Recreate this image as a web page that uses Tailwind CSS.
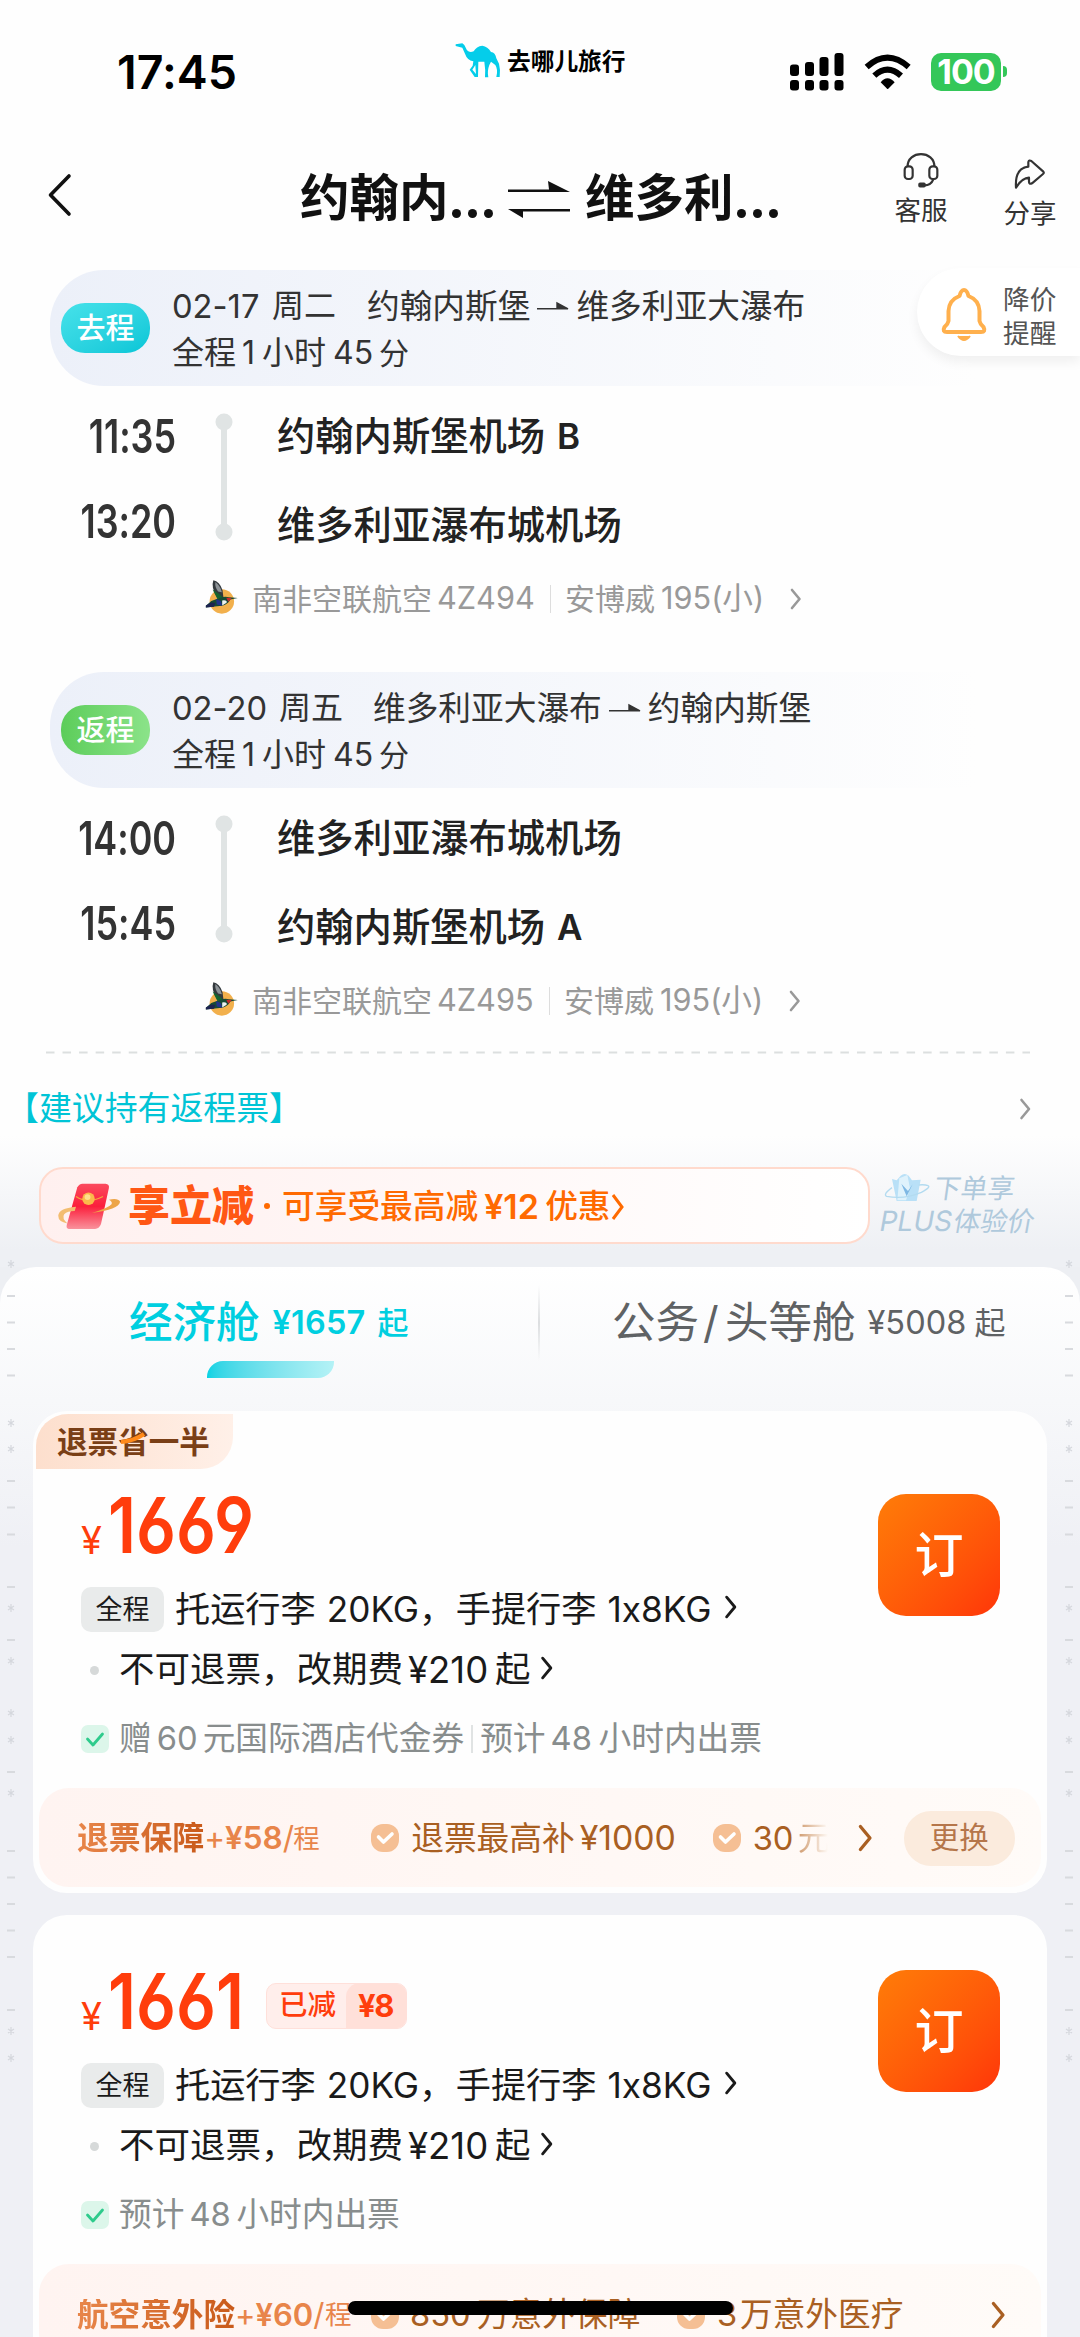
<!DOCTYPE html>
<html lang="zh-CN">
<head>
<meta charset="utf-8">
<title>航班预订</title>
<script src="https://cdn.jsdelivr.net/npm/@tailwindcss/browser@4"></script>
</head>
<body class="bg-[#fefefe]">
<svg class="hidden">
  <defs>
    <symbol id="bird" viewBox="48 42 96 100">
      <circle cx="97" cy="105" r="36" fill="#f2b04c"/>
      <path d="M72 43Q90 46 99 72L102 96L84 94Q64 66 72 43Z" fill="#33393d"/>
      <path d="M78 48Q92 58 97 78L86 76Q76 64 78 48Z" fill="#8d9397"/>
      <path d="M70 70L90 84L102 96L84 98Z" fill="#14642f"/>
      <path d="M50 118L66 104L92 94Q108 89 118 93L144 95L122 99Q116 112 98 118L76 120L50 123Z" fill="#174a35"/>
      <path d="M80 98L94 104L98 118L82 114Z" fill="#23318c"/>
      <path d="M98 102Q114 100 111 109L98 117Z" fill="#eef2f2"/>
      <path d="M110 94L126 95L116 106Z" fill="#c8272d"/>
      <path d="M50 117L66 108L78 110L74 121L50 123Z" fill="#1d2350"/>
    </symbol>
    <symbol id="chev" viewBox="0 0 12 22"><path d="M2 2 L9.500 11 L2 20" fill="none" stroke="currentColor" stroke-width="2.600" stroke-linecap="round" stroke-linejoin="round"/></symbol>
    <symbol id="half" viewBox="0 0 32 10"><path d="M0 7.800H31L20 2V7.800" fill="currentColor" stroke="currentColor" stroke-width="1.400"/></symbol>
    <symbol id="tick" viewBox="0 0 28 28"><rect width="28" height="28" rx="7" fill="#dcf6ea"/><path d="M6.500 14 L12 20 L21.500 9" fill="none" stroke="#2ecb8c" stroke-width="2.800" stroke-linecap="round" stroke-linejoin="round"/></symbol>
    <symbol id="badge" viewBox="0 0 28 28"><rect width="28" height="28" rx="12" fill="#f5bf94"/><path d="M7.500 13 L12.500 18 L21 10" fill="none" stroke="#fff" stroke-width="3.600" stroke-linecap="round" stroke-linejoin="round"/></symbol>
    <symbol id="star" viewBox="0 0 8 10"><path d="M4 1V9M1 3L7 7M7 3L1 7" stroke="#d5d7dd" stroke-width="1.200"/></symbol>
    <symbol id="marks" viewBox="0 1255 8 820">
      <g fill="#d8dade">
        <rect x="0" y="1295" width="8" height="2"/><rect x="0" y="1321.500" width="8" height="2"/><rect x="0" y="1348" width="8" height="2"/><rect x="0" y="1374.500" width="8" height="2"/>
        <rect x="0" y="1480" width="8" height="2"/><rect x="0" y="1506.500" width="8" height="2"/><rect x="0" y="1533.500" width="8" height="2"/><rect x="0" y="1586" width="8" height="2"/><rect x="0" y="1639" width="8" height="2"/>
        <rect x="0" y="1771" width="8" height="2"/><rect x="0" y="1850" width="8" height="2"/><rect x="0" y="1876.500" width="8" height="2"/><rect x="0" y="1903" width="8" height="2"/><rect x="0" y="1929.500" width="8" height="2"/><rect x="0" y="1956" width="8" height="2"/><rect x="0" y="2009" width="8" height="2"/>
      </g>
      <use href="#star" x="0" y="1259" width="8" height="10"/><use href="#star" x="0" y="1418" width="8" height="10"/><use href="#star" x="0" y="1444" width="8" height="10"/><use href="#star" x="0" y="1603" width="8" height="10"/><use href="#star" x="0" y="1656" width="8" height="10"/><use href="#star" x="0" y="1708" width="8" height="10"/><use href="#star" x="0" y="1735" width="8" height="10"/><use href="#star" x="0" y="1788" width="8" height="10"/><use href="#star" x="0" y="2026" width="8" height="10"/><use href="#star" x="0" y="2053" width="8" height="10"/>
    </symbol>
  </defs>
</svg>
<div class="relative flex h-[2337px] w-[1080px] flex-col overflow-hidden whitespace-nowrap bg-[#fefefe] font-[Inter,'Noto_Sans_CJK_SC',sans-serif] leading-none text-[#222] [font-feature-settings:'calt'_0]">

  <!-- status bar -->
  <div class="flex h-[130px] shrink-0 items-start">
    <div class="ml-[117px] mt-[49px] w-[338px] text-[46.500px] font-semibold text-black">17:45</div>
    <svg class="mt-[43px] h-[35px] w-[46px]" viewBox="44 70 138 105"><path fill="#04cdea" fill-rule="evenodd" d="M46 74L66 71L72 76L80 92Q88 100 100 95Q108 80 126 78Q142 80 152 97Q165 98 168 116L176 132Q181 150 178 172L168 172Q174 150 165 136L152 126L147 136Q140 154 144 173L134 173Q136 150 132 126L114 126L113 172L103 172L88 150L97 138L99 125Q80 121 74 102L66 84L46 79ZM105 136L96 150L107 163Z"/></svg>
    <div class="ml-[6px] mt-[50px] w-[283px] text-[23.700px] font-bold text-black">去哪儿旅行</div>
    <svg class="mt-[53px] h-[38px] w-[54px]" viewBox="0 0 54 38"><g fill="#000"><rect y="11.500" width="9" height="11.500" rx="3"/><rect x="15" y="9" width="9" height="14" rx="3"/><rect x="29.500" y="4" width="9" height="19" rx="3"/><rect x="44.500" y="0" width="9" height="23" rx="3"/><rect y="27" width="9" height="10.500" rx="3"/><rect x="15" y="27" width="9" height="10.500" rx="3"/><rect x="29.500" y="27" width="9" height="10.500" rx="3"/><rect x="44.500" y="27" width="9" height="10.500" rx="3"/></g></svg>
    <svg class="ml-[20px] mt-[53px] h-[36px] w-[47px]" viewBox="282 38 141 108"><g fill="none" stroke="#000" stroke-width="18"><path d="M290 80Q352 24 416 80"/><path d="M313 106Q352 70 393 106"/></g><path d="M332 126Q352 102 374 126L353 147Z"/></svg>
    <div class="ml-[20px] mt-[53px] flex h-[38px] w-[70px] items-center justify-center rounded-[10px] bg-[#34c759] text-[34px] font-bold tracking-[-1px] text-white">100</div>
    <div class="ml-[2px] mt-[66px] h-[11px] w-[4px] rounded-r-full bg-[#34c759]"></div>
  </div>

  <!-- title bar -->
  <div class="flex h-[140px] shrink-0 items-start text-[#111]">
    <svg class="ml-[46px] mt-[43px] h-[44px] w-[26px]" viewBox="0 0 26 44" fill="none" stroke="#111" stroke-width="3.600" stroke-linecap="round" stroke-linejoin="round"><path d="M23 3L4.500 22L23 41"/></svg>
    <div class="ml-[228px] mt-[44px] flex w-[207px] items-end text-[49.500px] font-bold">约翰内<span class="mb-[6px] ml-[3px] flex gap-[7px]"><i class="size-[9px] rounded-full bg-[#111]"></i><i class="size-[9px] rounded-full bg-[#111]"></i><i class="size-[9px] rounded-full bg-[#111]"></i></span></div>
    <svg class="mt-[50px] h-[40px] w-[64px]" viewBox="0 0 64 40"><path d="M1 9.500H42L41 1L63 12H1ZM63 29H1L16 38V31.500H63Z" fill="#111"/></svg>
    <div class="ml-[14px] mt-[44px] flex w-[308px] items-end text-[49.500px] font-bold">维多利<span class="mb-[6px] ml-[3px] flex gap-[7px]"><i class="size-[9px] rounded-full bg-[#111]"></i><i class="size-[9px] rounded-full bg-[#111]"></i><i class="size-[9px] rounded-full bg-[#111]"></i></span></div>
    <div class="mt-[22px] flex w-[56px] flex-col items-center text-[26.500px] text-[#333]">
      <svg class="h-[36px] w-[36px]" viewBox="400 334 108 108" fill="none" stroke="#333" stroke-width="6.500"><path d="M414 378C412 328 496 328 494 378"/><rect x="405" y="377" width="24" height="38" rx="10"/><rect x="479" y="377" width="24" height="38" rx="10"/><path d="M491 416Q484 434 464 434"/><rect x="449" y="429" width="16" height="8" rx="2" fill="#333"/></svg>
      <span class="mt-[9px]">客服</span>
    </div>
    <div class="ml-[54px] mt-[28px] flex w-[54px] flex-col items-center text-[26.500px] text-[#333]">
      <svg class="h-[32px] w-[32px]" viewBox="736 352 96 96" fill="none" stroke="#333" stroke-width="6.500" stroke-linejoin="round"><path d="M742 441Q738 382 779 378V364Q781 357 788 361L824 393Q827 397 823 400L790 428Q782 432 781 424V411Q760 412 742 441Z"/></svg>
      <span class="mt-[10px]">分享</span>
    </div>
  </div>

  <!-- outbound leg -->
  <div class="ml-[50px] flex h-[116px] shrink-0 items-center rounded-l-[54px] bg-gradient-to-r from-[#ecf0f9] to-[#fefefe] to-90% text-[32.700px] text-[#333]">
    <div class="ml-[11px] flex h-[50px] w-[89px] items-center justify-center rounded-[24px] bg-gradient-to-br from-[#45e2ea] to-[#00c6d7] pt-px text-[29px] font-medium text-white">去程</div>
    <div class="ml-[22px] flex flex-col gap-[14px] pt-[3px]">
      <div class="flex items-center"><span class="w-[100px] text-[32.700px]">02-17</span><span class="w-[95px] text-[32px]">周二</span><span>约翰内斯堡</span><svg class="mx-[7px] h-[10px] w-[32px]"><use href="#half"/></svg><span>维多利亚大瀑布</span></div>
      <div class="flex items-center text-[32px]"><span>全程</span><span class="w-[26px] pl-[6px]">1</span><span>小时</span><span class="w-[53px] pl-[7px]">45</span><span class="text-[30px]">分</span></div>
    </div>
  </div>
  <div class="flex h-[183px] shrink-0">
    <div class="w-[176px] pt-[7px] text-[46px] font-semibold text-[#333]">
      <div class="flex h-[85px] origin-right scale-x-[.78] items-center justify-end">11:35</div>
      <div class="flex h-[85px] origin-right scale-x-[.78] items-center justify-end">13:20</div>
    </div>
    <svg class="ml-[39px] h-[183px] w-[18px] text-[#e0e4e4]" viewBox="0 0 18 183" fill="currentColor"><circle cx="9" cy="36" r="8.500"/><circle cx="9" cy="146" r="8.500"/><rect x="6" y="36" width="6" height="110"/></svg>
    <div class="ml-[44px] pt-[6px] text-[38.300px] font-medium">
      <div class="flex h-[89px] items-center">约翰内斯堡机场<span class="ml-[12px] font-semibold text-[35px]">B</span></div>
      <div class="flex h-[89px] items-center">维多利亚瀑布城机场</div>
    </div>
  </div>
  <div class="mb-[45px] flex h-[58px] shrink-0 items-center pt-px text-[30px] text-[#999]">
    <svg class="ml-[205px] mb-[4px] h-[34px] w-[33px]"><use href="#bird"/></svg>
    <span class="ml-[14px]">南非空联航空</span><span class="w-[118px] pl-[5px] text-[30.700px]">4Z494</span>
    <i class="mr-[14px] h-[28px] w-px bg-[#ddd]"></i><span>安博威</span><span class="w-[121px] pl-[6px] text-[30.700px]">195(小)</span>
    <svg class="ml-[14px] h-[22px] w-[12px]"><use href="#chev"/></svg>
  </div>

  <!-- return leg -->
  <div class="ml-[50px] flex h-[116px] shrink-0 items-center rounded-l-[54px] bg-gradient-to-r from-[#ecf0f9] to-[#fefefe] to-90% text-[32.700px] text-[#333]">
    <div class="ml-[11px] flex h-[50px] w-[89px] items-center justify-center rounded-[24px] bg-gradient-to-r from-[#5ccd5a] to-[#8be389] pt-px text-[29px] font-medium text-white">返程</div>
    <div class="ml-[22px] flex flex-col gap-[14px] pt-[3px]">
      <div class="flex items-center"><span class="w-[107px] text-[32.700px]">02-20</span><span class="w-[94px] text-[32px]">周五</span><span>维多利亚大瀑布</span><svg class="mx-[7px] h-[10px] w-[32px]"><use href="#half"/></svg><span>约翰内斯堡</span></div>
      <div class="flex items-center text-[32px]"><span>全程</span><span class="w-[26px] pl-[6px]">1</span><span>小时</span><span class="w-[53px] pl-[7px]">45</span><span class="text-[30px]">分</span></div>
    </div>
  </div>
  <div class="flex h-[183px] shrink-0">
    <div class="w-[176px] pt-[7px] text-[46px] font-semibold text-[#333]">
      <div class="flex h-[85px] origin-right scale-x-[.78] items-center justify-end">14:00</div>
      <div class="flex h-[85px] origin-right scale-x-[.78] items-center justify-end">15:45</div>
    </div>
    <svg class="ml-[39px] h-[183px] w-[18px] text-[#e0e4e4]" viewBox="0 0 18 183" fill="currentColor"><circle cx="9" cy="36" r="8.500"/><circle cx="9" cy="146" r="8.500"/><rect x="6" y="36" width="6" height="110"/></svg>
    <div class="ml-[44px] pt-[6px] text-[38.300px] font-medium">
      <div class="flex h-[89px] items-center">维多利亚瀑布城机场</div>
      <div class="flex h-[89px] items-center">约翰内斯堡机场<span class="ml-[12px] font-semibold text-[35px]">A</span></div>
    </div>
  </div>
  <div class="flex h-[58px] shrink-0 items-center pt-px text-[30px] text-[#999]">
    <svg class="ml-[205px] mb-[4px] h-[34px] w-[33px]"><use href="#bird"/></svg>
    <span class="ml-[14px]">南非空联航空</span><span class="w-[117px] pl-[5px] text-[30.700px]">4Z495</span>
    <i class="mr-[14px] h-[28px] w-px bg-[#ddd]"></i><span>安博威</span><span class="w-[121px] pl-[6px] text-[30.700px]">195(小)</span>
    <svg class="ml-[14px] h-[22px] w-[12px]"><use href="#chev"/></svg>
  </div>

  <svg class="ml-[46px] mt-[22px] h-[3px] w-[984px] shrink-0"><line x1="0" y1="1.500" x2="984" y2="1.500" stroke="#dcdfdf" stroke-width="2" stroke-dasharray="8.500 8.050"/></svg>

  <!-- notice, promotion and fare list -->
  <div class="mt-px flex flex-1 flex-col bg-[#edeff3]">
    <div class="flex h-[212px] shrink-0 flex-col bg-linear-[180deg,#fefefe_38%,#eef0f4_92%]">
      <div class="flex h-[106px] items-center pt-px text-[32.900px] text-[#00c4d6]">
        <span class="ml-[6px] w-[1013px]">【建议持有返程票】</span>
        <svg class="h-[22px] w-[13px] text-[#999]"><use href="#chev"/></svg>
      </div>
      <div class="flex h-[106px] items-start">
        <div class="ml-[39px] mt-[6px] flex h-[77px] w-[831px] items-center rounded-[24px] border-2 border-[#ffdacd] bg-gradient-to-r from-[#fff0ef] to-white">
          <svg class="ml-[15px] h-[48px] w-[66px]" viewBox="80 62 195 146"><defs><linearGradient id="env" x1="0" y1="0" x2="0" y2="1"><stop offset="0" stop-color="#fb4a5e"/><stop offset=".5" stop-color="#fb1f3c"/><stop offset="1" stop-color="#f9929c"/></linearGradient></defs><path d="M158 67H228Q240 68 238 80L214 190Q208 205 196 205H116Q107 203 110 192L142 78Q147 68 158 67Z" fill="url(#env)"/><path d="M138 137Q84 142 84 165Q84 184 112 188Q94 172 102 160Q112 150 134 150Z" fill="#f3bd70"/><path d="M186 156Q236 142 246 130Q250 122 238 116Q266 110 272 122Q268 146 186 156Z" fill="#eda548"/><path d="M138 106Q172 130 220 106" fill="none" stroke="#f6a53c" stroke-width="4"/><circle cx="176" cy="113" r="19" fill="#fbb94b"/><circle cx="173" cy="108" r="9" fill="#ffe08c"/></svg>
          <span class="ml-[6px] pt-px text-[42px] font-black text-[#ff5714]">享立减</span>
          <i class="ml-[10px] mr-[12px] size-[6px] rounded-full bg-[#ff6a00]"></i>
          <span class="flex items-center pt-[2px] text-[32.700px] font-medium text-[#ff6a00]">可享受最高减<span class="w-[67px] pl-[6px] text-[34px] font-semibold">¥12</span>优惠<svg class="h-[32px] w-[14px]" viewBox="0 0 14 32"><path d="M2 4L11 16L2 28" fill="none" stroke="currentColor" stroke-width="3"/></svg></span>
        </div>
        <div class="ml-[10px] mt-[12px] text-[26.900px] text-[#afc9dc]">
          <div class="flex items-center"><svg class="ml-[4px] h-[30px] w-[46px]" viewBox="38 64 138 90"><path d="M62 82L76 86L88 72Q100 62 112 72L122 86L148 84L136 148H76Z" fill="#b9e0f7"/><path d="M84 80L108 70L116 110L104 146H78Z" fill="#dff2fc"/><path d="M90 96L106 134L124 98L110 118Z" fill="#7fb8e4"/><path d="M62 108Q34 128 46 134Q100 144 150 122Q180 106 170 102Q160 98 142 100" fill="none" stroke="#b3dbf0" stroke-width="4"/></svg><span class="ml-[4px] -skew-x-[8deg]">下单享</span></div>
          <div class="mt-[4px] flex -skew-x-[10deg] items-center"><span class="w-[74px] text-[28px]">PLUS</span>体验价</div>
        </div>
      </div>
    </div>

    <div class="flex flex-1 flex-col rounded-t-[36px] bg-linear-[180deg,#ffffff_0px,#f7f8fa_133px,#eff0f5_280px]">
      <div class="flex h-[144px] shrink-0">
        <div class="w-[538px]">
          <div class="flex h-[94px] items-end pl-[129px] text-[43.500px] font-medium text-[#00cfe0]"><span class="mb-[17px] mt-auto">经济舱</span><span class="mb-[22px] ml-[13px] w-[105px] text-[32.500px] font-semibold tracking-[.2px]">¥1657</span><span class="mb-[23px] text-[31px]">起</span></div>
          <div class="ml-[207px] h-[17px] w-[127px] rounded-br-[16px] rounded-tl-[16px] bg-gradient-to-r from-[#04d3e4] to-[#b4f2f6]"></div>
        </div>
        <i class="mt-[18px] h-[76px] w-[2px] bg-linear-[180deg,transparent,#dcdee0_50%,transparent]"></i>
        <div class="flex h-[94px] items-end pl-[72px] text-[43.500px] text-[#5f6264]"><span class="mb-[17px]">公务</span><span class="mb-[17px] w-[26px] pl-[4px]">/</span><span class="mb-[17px]">头等舱</span><span class="mb-[22px] ml-[12px] w-[107px] text-[32.500px]">¥5008</span><span class="mb-[23px] text-[31px]">起</span></div>
      </div>

      <!-- fare card -->
      <div class="mx-[33px] flex h-[482px] shrink-0 flex-col rounded-[34px] bg-[#fefefe]">
        <div class="flex h-[58px] shrink-0 pl-[3px] pt-[3px]">
          <div class="relative flex h-[55px] w-[197px] items-center rounded-br-[32px] rounded-tl-[32px] bg-gradient-to-r from-[#fddfcd] to-[#fff0e8] pl-[21px] pt-[2px] text-[30.600px] font-bold text-[#7a3f16]">退票省一半<svg class="absolute left-[84px] top-[18px] h-[12px] w-[26px]" viewBox="0 0 26 12"><path d="M1 10Q14 9 24 2" fill="none" stroke="#ff8a1a" stroke-width="4"/></svg></div>
        </div>
        <div class="flex shrink-0">
          <div class="w-[845px] pl-[48px]">
            <div class="relative flex h-[113px] items-center text-[#ff3d0c]"><span class="w-[27px] pt-[29px] text-[38px]">¥</span><span class="origin-left scale-x-[.86] text-[77px] font-semibold [font-feature-settings:'cv03','cv04']">1669</span></div>
            <div class="flex h-[54px] items-center pt-px text-[35.200px] text-[#1a1a1a]"><span class="mr-[11px] flex h-[45px] w-[83px] items-center justify-center rounded-[10px] bg-[#e9ebeb] text-[27px]">全程</span>托运行李<span class="w-[140px] pl-[11px]">20KG，</span>手提行李<span class="w-[127px] pl-[11px]">1x8KG</span><svg class="mb-[5px] h-[24px] w-[14px]"><use href="#chev"/></svg></div>
            <div class="flex h-[66px] items-center pt-[2px] text-[35.500px] text-[#1a1a1a]"><i class="ml-[9px] mr-[20px] size-[9px] rounded-full bg-[#d6d9d9]"></i>不可退票，改期费<span class="w-[92px] pl-[5px] text-[36.500px]">¥210</span>起<svg class="mb-[5px] ml-[9px] h-[24px] w-[14px]"><use href="#chev"/></svg></div>
            <div class="flex h-[72px] items-center pt-px text-[32.700px] text-[#888d8d]"><svg class="mr-[10px] size-[28px]"><use href="#tick"/></svg>赠<span class="w-[51px] pl-[5px] text-[32.700px]">60</span>元国际酒店代金券<i class="mx-[7px] h-[28px] w-[2px] bg-[#e0e3e3]"></i>预计<span class="w-[53px] pl-[5px] text-[32.700px]">48</span>小时内出票</div>
          </div>
          <div class="mt-[25px] flex size-[122px] items-center justify-center rounded-[28px] bg-gradient-to-br from-[#ff7c08] to-[#ff3409] text-[49px] font-medium text-white">订</div>
        </div>
        <div class="mx-[6px] mt-[14px] flex h-[99px] shrink-0 items-center rounded-[30px] bg-gradient-to-r from-[#fff4f1] to-[#fffbf8] pt-px text-[32.700px] text-[#a95f22]">
          <span class="ml-[38px] bg-linear-[90deg,#e8864a,#c95a1a] bg-clip-text text-[31.800px] font-bold text-transparent">退票保障</span><span class="w-[89px] text-[31.500px] font-semibold text-[#e8854a]"><span class="font-normal">+</span>¥58<span class="font-normal">/</span></span><span class="w-[78px] text-[26.500px] text-[#e8854a]">程</span>
          <svg class="mr-[12px] size-[28px]"><use href="#badge"/></svg><span>退票最高补</span><span class="w-[138px] pl-[5px] text-[33.800px]">¥1000</span>
          <svg class="mr-[12px] size-[28px]"><use href="#badge"/></svg><span class="w-[45px]">30</span><span class="w-[59px] bg-linear-[90deg,#cf9a6e,#fffaf6_30px] bg-clip-text text-transparent">元</span>
          <svg class="h-[28px] w-[17px]"><use href="#chev"/></svg>
          <span class="ml-[30px] flex h-[55px] w-[111px] items-center justify-center rounded-[27px] bg-[#fbebdd] text-[29.500px] text-[#b5764a]">更换</span>
        </div>
      </div>

      <!-- fare card -->
      <div class="mx-[33px] mt-[22px] flex h-[482px] shrink-0 flex-col rounded-[34px] bg-[#fefefe] pt-[30px]">
        <div class="flex shrink-0">
          <div class="w-[845px] pl-[48px]">
            <div class="relative flex h-[113px] items-center text-[#ff3d0c]"><span class="w-[27px] pt-[29px] text-[38px]">¥</span><span class="w-[158px] origin-left scale-x-[.86] text-[77px] font-semibold [font-feature-settings:'cv03','cv04']">1661</span>
              <span class="mt-[8px] flex h-[46px] w-[141px] items-center overflow-hidden rounded-[10px] border border-[#ffe0da] bg-[#ffeeeb] pl-[12px] text-[28.500px] font-medium">已减<span class="ml-[10px] flex h-[46px] flex-1 items-center rounded-tl-[14px] bg-[#ffe0d9] pl-[12px] text-[31px] font-bold tracking-[-1.500px]">¥8</span></span></div>
            <div class="flex h-[54px] items-center pt-px text-[35.200px] text-[#1a1a1a]"><span class="mr-[11px] flex h-[45px] w-[83px] items-center justify-center rounded-[10px] bg-[#e9ebeb] text-[27px]">全程</span>托运行李<span class="w-[140px] pl-[11px]">20KG，</span>手提行李<span class="w-[127px] pl-[11px]">1x8KG</span><svg class="mb-[5px] h-[24px] w-[14px]"><use href="#chev"/></svg></div>
            <div class="flex h-[66px] items-center pt-[2px] text-[35.500px] text-[#1a1a1a]"><i class="ml-[9px] mr-[20px] size-[9px] rounded-full bg-[#d6d9d9]"></i>不可退票，改期费<span class="w-[92px] pl-[5px] text-[36.500px]">¥210</span>起<svg class="mb-[5px] ml-[9px] h-[24px] w-[14px]"><use href="#chev"/></svg></div>
            <div class="flex h-[72px] items-center pt-px text-[32.700px] text-[#888d8d]"><svg class="mr-[10px] size-[28px]"><use href="#tick"/></svg>预计<span class="w-[52px] pl-[5px] text-[32.700px]">48</span>小时内出票</div>
          </div>
          <div class="mt-[25px] flex size-[122px] items-center justify-center rounded-[28px] bg-gradient-to-br from-[#ff7c08] to-[#ff3409] text-[49px] font-medium text-white">订</div>
        </div>
        <div class="mx-[6px] mt-[14px] flex h-[99px] shrink-0 items-center rounded-[30px] bg-gradient-to-r from-[#fff4f1] to-[#fffbf8] pt-[2px] text-[32.700px] text-[#a95f22]">
          <span class="ml-[38px] bg-linear-[90deg,#e8864a,#c95a1a] bg-clip-text text-[31.600px] font-bold text-transparent">航空意外险</span><span class="w-[90px] text-[31px] font-semibold text-[#e8854a]"><span class="font-normal">+</span>¥60<span class="font-normal">/</span></span><span class="w-[46px] text-[26.500px] text-[#e8854a]">程</span>
          <svg class="mr-[11px] size-[28px]"><use href="#badge"/></svg><span class="w-[67px]">850</span><span class="w-[200px]">万意外保障</span>
          <svg class="mr-[12px] size-[28px]"><use href="#badge"/></svg><span class="w-[23px]">3</span><span class="w-[250px]">万意外医疗</span>
          <svg class="h-[28px] w-[17px]"><use href="#chev"/></svg>
        </div>
      </div>
    </div>
  </div>

  <!-- floating price alert -->
  <div class="absolute right-0 top-[268px] flex h-[88px] w-[163px] items-center rounded-l-[44px] bg-white pl-[23px] shadow-[0_6px_12px_rgba(0,0,0,.06)]">
    <svg class="mt-[4px] h-[56px] w-[48px]" viewBox="0 0 48 56" fill="none" stroke="#ffb04d" stroke-width="4" stroke-linejoin="round"><path d="M24 4Q21 4 19.500 10Q9 14 8.500 25V35Q8 38 4.500 41Q2 46 7 46H41Q46 46 43.500 41Q40 38 39.500 35V25Q39 14 28.500 10Q27 4 24 4Z"/><path d="M18 50Q24 58 30 50" fill="#ffb04d" stroke-width="2"/></svg>
    <div class="ml-[15px] pt-[7px] text-[26.700px] leading-[34px] text-[#555]">降价<br>提醒</div>
  </div>

  <svg class="absolute left-[7px] top-[1255px] h-[820px] w-[8px]"><use href="#marks"/></svg>
  <svg class="absolute left-[1065px] top-[1255px] h-[820px] w-[8px]"><use href="#marks"/></svg>

  <!-- home indicator -->
  <div class="absolute left-[348px] top-[2301px] h-[14px] w-[385px] rounded-full bg-black"></div>
</div>
</body>
</html>
